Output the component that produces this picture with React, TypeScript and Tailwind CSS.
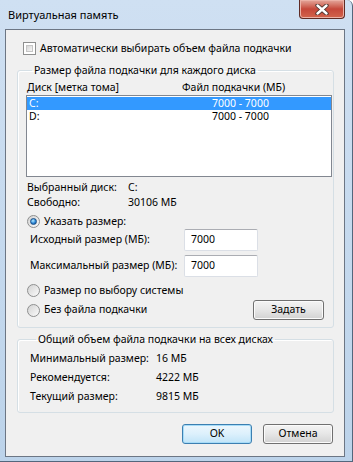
import React from 'react'

const font = "font-['Noto_Sans','Liberation_Sans',sans-serif]"

function CheckBox() {
  return (
    <span className="w-[13px] h-[13px] border border-[#8e8f8f] bg-white p-[2px] shrink-0">
      <span className="block w-full h-full border border-[#c5c5c5] bg-gradient-to-br from-[#d6d6d6] to-[#f6f6f6]" />
    </span>
  )
}

function Radio({ checked }: { checked?: boolean }) {
  return (
    <span className="w-[13px] h-[13px] rounded-full border border-[#8e8f8f] bg-gradient-to-br from-[#d2d2d2] to-[#fbfbfb] flex items-center justify-center shrink-0">
      {checked && (
        <span className="w-[7px] h-[7px] rounded-full border border-[#1b4f86] bg-[radial-gradient(circle_at_40%_35%,#b6ecff,#2b86d6_55%,#0f4a8c)]" />
      )}
    </span>
  )
}

function Button({ label, width, primary }: { label: string; width: string; primary?: boolean }) {
  return (
    <div
      className={
        'h-[20px] rounded-[3px] border flex items-center justify-center shrink-0 ' +
        width +
        (primary
          ? ' border-[#3c7fb1] bg-gradient-to-b from-[#edf7fd] via-[#dcf0fc] to-[#c0e4f8] shadow-[inset_0_0_0_1px_#a6dcf8]'
          : ' border-[#707070] bg-gradient-to-b from-[#f4f4f4] via-[#e6e6e6] to-[#d2d2d2] shadow-[inset_0_0_0_1px_#fbfbfb]')
      }
    >
      {label}
    </div>
  )
}

function Input({ value }: { value: string }) {
  return (
    <div className="w-[74px] h-[22px] rounded-[2px] border border-[#dbdfe6] border-t-[#abadb3] bg-white flex items-center pl-[6px] shrink-0">
      {value}
    </div>
  )
}

function Group({ title, children, className }: { title: string; children: React.ReactNode; className?: string }) {
  return (
    <fieldset className={'ml-[11px] mr-[10px] border border-[#d5dfe5] rounded-[3px] shadow-[inset_1px_1px_0_#ffffff] ' + (className ?? '')}>
      <legend className="ml-[6px] px-[2px] leading-[14px]">{title}</legend>
      {children}
    </fieldset>
  )
}

const totals = [
  ['Минимальный размер:', '16 МБ'],
  ['Рекомендуется:', '4222 МБ'],
  ['Текущий размер:', '9815 МБ'],
]

export default function App() {
  return (
    <div className={'w-[353px] h-[462px] flex flex-col bg-gradient-to-b from-[#cfe0f2] to-[#bcd3ea] border-r border-b border-[#53667c] rounded-tr-[6px] text-[10.5px] text-black whitespace-nowrap ' + font}>
      {/* title bar */}
      <div className="h-[29px] flex items-start justify-between shrink-0">
        <span className="pl-[8px] pt-[7px] leading-[15px] text-[11px]">Виртуальная память</span>
        <div className="mr-[7px] w-[46px] h-[19px] rounded-b-[4px] border border-t-0 border-[#5f2b24] bg-gradient-to-b from-[#e3a79c] via-[#c5473a] to-[#d2644c] shadow-[inset_0_0_0_1px_#ecb1a6] flex items-center justify-center">
          <svg width="14" height="11" viewBox="0 0 14 11">
            <path d="M2.5 1.5 L11.5 9.5 M11.5 1.5 L2.5 9.5" stroke="#47302c" strokeWidth="4.2" strokeLinecap="round" />
            <path d="M2.5 1.5 L11.5 9.5 M11.5 1.5 L2.5 9.5" stroke="#ffffff" strokeWidth="2.4" strokeLinecap="round" />
          </svg>
        </div>
      </div>

      {/* client area */}
      <div className="ml-[5px] mr-[7px] h-[428px] bg-[#f0f0f0] border border-[#6c7684] flex flex-col">
        <div className="mt-[12px] pl-[17px] flex items-center gap-[4px] leading-[13px]">
          <CheckBox />
          <span>Автоматически выбирать объем файла подкачки</span>
        </div>

        <Group title="Размер файла подкачки для каждого диска" className="mt-[8px] pb-[7px] pl-[8px] pr-[1px]">
          <div className="mt-[3px] pl-[1px] grid grid-cols-[155px_1fr] leading-[14px]">
            <span>Диск [метка тома]</span>
            <span>Файл подкачки (МБ)</span>
          </div>
          <div className="mt-[1px] h-[82px] border border-[#828790] bg-white pt-[1px] leading-[13px]">
            <div className="grid grid-cols-[183px_1fr] bg-[#3399ff] text-white pl-[2px]">
              <span>C:</span>
              <span>7000 - 7000</span>
            </div>
            <div className="grid grid-cols-[183px_1fr] pl-[2px]">
              <span>D:</span>
              <span>7000 - 7000</span>
            </div>
          </div>

          <div className="mt-[3px] pl-[1px] grid grid-cols-[101px_1fr] leading-[15px]">
            <span>Выбранный диск:</span>
            <span>C:</span>
            <span>Свободно:</span>
            <span>30106 МБ</span>
          </div>

          <div className="mt-[5px] pl-[1px] flex items-center gap-[4px] leading-[13px]">
            <Radio checked />
            <span>Указать размер:</span>
          </div>
          <div className="mt-[1px] pl-[4px] flex items-center h-[22px]">
            <span className="w-[154px] shrink-0">Исходный размер (МБ):</span>
            <Input value="7000" />
          </div>
          <div className="mt-[4px] pl-[4px] flex items-center h-[22px]">
            <span className="w-[154px] shrink-0">Максимальный размер (МБ):</span>
            <Input value="7000" />
          </div>
          <div className="mt-[7px] pl-[1px] flex items-center gap-[4px] leading-[13px]">
            <Radio />
            <span>Размер по выбору системы</span>
          </div>
          <div className="mt-[3px] pl-[1px] pr-[8px] flex items-center h-[20px]">
            <Radio />
            <span className="ml-[4px] flex-1">Без файла подкачки</span>
            <Button label="Задать" width="w-[71px]" />
          </div>
        </Group>

        <Group title="Общий объем файла подкачки на всех дисках" className="mt-[4px] pb-[6px] pl-[12px]">
          <div className="mt-[3px] grid grid-cols-[126px_1fr] leading-[19px]">
            {totals.map(([label, value]) => (
              <React.Fragment key={label}>
                <span>{label}</span>
                <span>{value}</span>
              </React.Fragment>
            ))}
          </div>
        </Group>

        <div className="mt-[11px] mr-[11px] flex justify-end gap-[11px]">
          <Button label="OK" width="w-[70px]" primary />
          <Button label="Отмена" width="w-[70px]" />
        </div>
      </div>
    </div>
  )
}
